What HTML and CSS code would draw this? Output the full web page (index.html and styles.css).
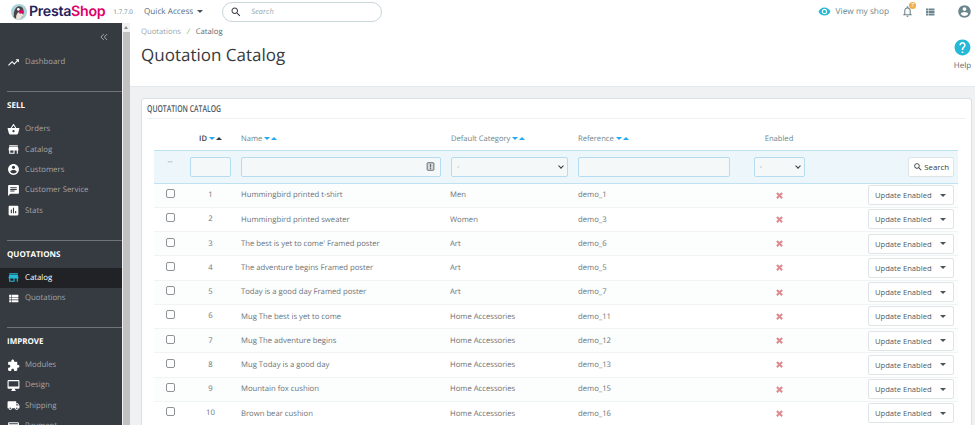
FILE: index.html
```html
<!DOCTYPE html>
<html lang="en">
<head>
  <meta charset="UTF-8" />
  <title>Quotation Catalog</title>
  <link rel="stylesheet" href="styles.css">
</head>
<body>
  <svg class="sprite" width="0" height="0">
    <symbol id="i-trend" viewBox="0 0 24 24"><path d="M16 6l2.29 2.29-4.88 4.88-4-4L2 16.59 3.41 18l6-6 4 4 6.3-6.29L22 12V6z"/></symbol>
    <symbol id="i-basket" viewBox="0 0 24 24"><path d="M17.21 9l-4.38-6.56c-.19-.28-.51-.42-.83-.42-.32 0-.64.14-.83.43L6.79 9H2c-.55 0-1 .45-1 1 0 .09.01.18.04.27l2.54 9.27c.23.84 1 1.46 1.92 1.46h13c.92 0 1.69-.62 1.93-1.46l2.54-9.27L23 10c0-.55-.45-1-1-1h-4.79zM9 9l3-4.4L15 9H9zm3 8c-1.1 0-2-.9-2-2s.9-2 2-2 2 .9 2 2-.9 2-2 2z"/></symbol>
    <symbol id="i-store" viewBox="0 0 24 24"><path d="M20 4H4v2h16V4zm1 10v-2l-1-5H4l-1 5v2h1v6h10v-6h4v6h2v-6h1zm-9 4H6v-4h6v4z"/></symbol>
    <symbol id="i-account" viewBox="0 0 24 24"><path d="M12 2C6.48 2 2 6.48 2 12s4.48 10 10 10 10-4.48 10-10S17.52 2 12 2zm0 3c1.66 0 3 1.34 3 3s-1.34 3-3 3-3-1.34-3-3 1.34-3 3-3zm0 14.2c-2.5 0-4.71-1.28-6-3.22.03-1.99 4-3.08 6-3.08 1.99 0 5.97 1.09 6 3.08-1.29 1.94-3.5 3.22-6 3.22z"/></symbol>
    <symbol id="i-chat" viewBox="0 0 24 24"><path d="M20 2H4c-1.1 0-1.99.9-1.99 2L2 22l4-4h14c1.1 0 2-.9 2-2V4c0-1.1-.9-2-2-2zM6 9h12v2H6V9zm8 5H6v-2h8v2zm4-6H6V6h12v2z"/></symbol>
    <symbol id="i-stats" viewBox="0 0 24 24"><path d="M19 3H5c-1.1 0-2 .9-2 2v14c0 1.1.9 2 2 2h14c1.1 0 2-.9 2-2V5c0-1.1-.9-2-2-2zM9 17H7v-7h2v7zm4 0h-2V7h2v10zm4 0h-2v-4h2v4z"/></symbol>
    <symbol id="i-list" viewBox="0 0 24 24"><path d="M4 14h4v-4H4v4zm0 5h4v-4H4v4zM4 9h4V5H4v4zm5 5h12v-4H9v4zm0 5h12v-4H9v4zM9 5v4h12V5H9z"/></symbol>
    <symbol id="i-puzzle" viewBox="0 0 24 24"><path d="M20.5 11H19V7c0-1.1-.9-2-2-2h-4V3.5C13 2.12 11.88 1 10.5 1S8 2.12 8 3.5V5H4c-1.1 0-1.99.9-1.99 2v3.8H3.5c1.49 0 2.7 1.21 2.7 2.7s-1.21 2.7-2.7 2.7H2V20c0 1.1.9 2 2 2h3.8v-1.5c0-1.49 1.21-2.7 2.7-2.7 1.49 0 2.7 1.21 2.7 2.7V22H17c1.1 0 2-.9 2-2v-4h1.5c1.38 0 2.5-1.12 2.5-2.5S21.88 11 20.5 11z"/></symbol>
    <symbol id="i-desktop" viewBox="0 0 24 24"><path d="M21 2H3c-1.1 0-2 .9-2 2v12c0 1.1.9 2 2 2h7l-2 3v1h8v-1l-2-3h7c1.1 0 2-.9 2-2V4c0-1.1-.9-2-2-2zm0 12H3V4h18v10z"/></symbol>
    <symbol id="i-truck" viewBox="0 0 24 24"><path d="M20 8h-3V4H3c-1.1 0-2 .9-2 2v11h2c0 1.66 1.34 3 3 3s3-1.34 3-3h6c0 1.66 1.34 3 3 3s3-1.34 3-3h2v-5l-3-4zM6 18.5c-.83 0-1.5-.67-1.5-1.5s.67-1.5 1.5-1.5 1.5.67 1.5 1.5-.67 1.5-1.5 1.5zm13.5-9l1.96 2.5H17V9.5h2.5zm-1.5 9c-.83 0-1.5-.67-1.5-1.5s.67-1.5 1.5-1.5 1.5.67 1.5 1.5-.67 1.5-1.5 1.5z"/></symbol>
    <symbol id="i-card" viewBox="0 0 24 24"><path d="M20 4H4c-1.11 0-1.99.89-1.99 2L2 18c0 1.11.89 2 2 2h16c1.11 0 2-.89 2-2V6c0-1.11-.89-2-2-2zm0 14H4v-6h16v6zm0-10H4V6h16v2z"/></symbol>
    <symbol id="i-eye" viewBox="0 0 24 24"><path d="M12 4.5C7 4.5 2.73 7.61 1 12c1.73 4.39 6 7.5 11 7.5s9.27-3.11 11-7.5c-1.73-4.39-6-7.5-11-7.5zM12 17c-2.76 0-5-2.24-5-5s2.24-5 5-5 5 2.24 5 5-2.24 5-5 5zm0-8c-1.66 0-3 1.34-3 3s1.34 3 3 3 3-1.34 3-3-1.34-3-3-3z"/></symbol>
    <symbol id="i-bell" viewBox="0 0 24 24"><path d="M12 22c1.1 0 2-.9 2-2h-4c0 1.1.9 2 2 2zm6-6v-5c0-3.07-1.63-5.64-4.5-6.32V4c0-.83-.67-1.5-1.5-1.5s-1.5.67-1.5 1.5v.68C7.64 5.36 6 7.92 6 11v5l-2 2v1h16v-1l-2-2zm-2 1H8v-6c0-2.48 1.51-4.5 4-4.5s4 2.02 4 4.5v6z"/></symbol>
    <symbol id="i-help" viewBox="0 0 24 24"><path d="M12 2C6.48 2 2 6.48 2 12s4.48 10 10 10 10-4.48 10-10S17.52 2 12 2zm1 17h-2v-2h2v2zm2.07-7.75l-.9.92C13.45 12.9 13 13.5 13 15h-2v-.5c0-1.1.45-2.1 1.17-2.83l1.24-1.26c.37-.36.59-.86.59-1.41 0-1.1-.9-2-2-2s-2 .9-2 2H8c0-2.21 1.79-4 4-4s4 1.79 4 4c0 .88-.36 1.68-.93 2.25z"/></symbol>
    <symbol id="i-search" viewBox="0 0 24 24"><path d="M15.5 14h-.79l-.28-.27C15.41 12.59 16 11.11 16 9.5 16 5.91 13.09 3 9.5 3S3 5.91 3 9.5 5.91 16 9.5 16c1.61 0 3.09-.59 4.23-1.57l.27.28v.79l5 4.99L20.49 19l-4.99-5zm-6 0C7.01 14 5 11.99 5 9.5S7.01 5 9.5 5 14 7.01 14 9.5 11.99 14 9.5 14z"/></symbol>
    <symbol id="i-close" viewBox="0 0 24 24"><path d="M21 7L17 3 12 8 7 3 3 7 8 12 3 17 7 21 12 16 17 21 21 17 16 12z"/></symbol>
    <symbol id="i-collapse" viewBox="0 0 24 24"><path d="M11.5 5L4.5 12l7 7M19.5 5l-7 7 7 7" fill="none" stroke="currentColor" stroke-width="2"/></symbol>
    <symbol id="i-exclaim" viewBox="0 0 24 24"><rect x="3" y="2" width="18" height="20" rx="2" fill="#d5dadc" stroke="currentColor" stroke-width="2.500"/><path d="M10.500 5.500h3v8.500h-3zM10.500 15.500h3v3h-3z"/></symbol>
  </svg>

  <header class="topbar">
    <div class="logo">
      <svg class="logo-bird" viewBox="0 0 24 24">
        <circle cx="12" cy="12" r="12" fill="#a9d3d8"/>
        <path d="M4 19C4 10 7 4 12 3.500c4.500-.300 7 3 7 8 0 5-2 9-6 10.500-3.500 1-7 0-9-3z" fill="#4a4448"/>
        <path d="M8 23c-1-4 0-8 3-10.500 3 .5 6 1.500 7.500 3.500-1.500 4.500-6 8-10.500 7z" fill="#efe4d8"/>
        <path d="M11 9l7 .500 1.500 3.500-6.500 1.500z" fill="#df0067"/>
        <circle cx="11" cy="8" r="2" fill="#fff"/>
      </svg>
      <span class="logo-text">Presta<b>Shop</b></span>
    </div>
    <span class="version">1.7.7.0</span>
    <span class="quick">Quick Access <i class="caret"></i></span>
    <div class="search-box">
      <svg class="icon"><use href="#i-search"/></svg>
      <span>Search</span>
    </div>
    <a class="shop-link"><svg class="icon"><use href="#i-eye"/></svg>View my shop</a>
    <div class="bell"><svg class="icon"><use href="#i-bell"/></svg><span class="badge">7</span></div>
    <svg class="icon top-list"><use href="#i-list"/></svg>
    <svg class="icon top-user"><use href="#i-account"/></svg>
  </header>

  <div class="layout">
    <nav class="sidebar">
      <div class="collapse"><svg class="icon"><use href="#i-collapse"/></svg></div>
      <a class="nav-item first"><svg class="icon"><use href="#i-trend"/></svg>Dashboard</a>

      <h4 class="nav-title">SELL</h4>
      <a class="nav-item"><svg class="icon"><use href="#i-basket"/></svg>Orders</a>
      <a class="nav-item"><svg class="icon"><use href="#i-store"/></svg>Catalog</a>
      <a class="nav-item"><svg class="icon"><use href="#i-account"/></svg>Customers</a>
      <a class="nav-item"><svg class="icon"><use href="#i-chat"/></svg>Customer Service</a>
      <a class="nav-item"><svg class="icon"><use href="#i-stats"/></svg>Stats</a>

      <h4 class="nav-title">QUOTATIONS</h4>
      <a class="nav-item active"><svg class="icon"><use href="#i-store"/></svg>Catalog</a>
      <a class="nav-item"><svg class="icon"><use href="#i-list"/></svg>Quotations</a>

      <h4 class="nav-title">IMPROVE</h4>
      <a class="nav-item"><svg class="icon"><use href="#i-puzzle"/></svg>Modules</a>
      <a class="nav-item"><svg class="icon"><use href="#i-desktop"/></svg>Design</a>
      <a class="nav-item"><svg class="icon"><use href="#i-truck"/></svg>Shipping</a>
      <a class="nav-item"><svg class="icon"><use href="#i-card"/></svg>Payment</a>
    </nav>
    <div class="scrollbar"><i class="scroll-up"></i><div class="scroll-thumb"></div></div>

    <main class="content">
      <section class="page-head">
        <div>
          <div class="crumbs"><span>Quotations</span><em>/</em><strong>Catalog</strong></div>
          <h1>Quotation Catalog</h1>
        </div>
        <div class="help"><svg class="icon"><use href="#i-help"/></svg><span>Help</span></div>
      </section>

      <section class="card">
        <h3 class="card-title"><span>QUOTATION CATALOG</span></h3>
        <table class="grid">
          <colgroup>
            <col class="c-check"><col class="c-id"><col class="c-name"><col class="c-cat"><col class="c-ref"><col class="c-en"><col class="c-act">
          </colgroup>
          <thead>
            <tr class="heads">
              <th></th>
              <th class="center strong">ID <i class="down"></i><i class="up dark"></i></th>
              <th>Name <i class="down"></i><i class="up"></i></th>
              <th class="cat-head">Default Category <i class="down"></i><i class="up"></i></th>
              <th>Reference <i class="down"></i><i class="up"></i></th>
              <th class="center">Enabled</th>
              <th></th>
            </tr>
            <tr class="filters">
              <td class="center dashes">--</td>
              <td class="center"><div class="field f-id"></div></td>
              <td><div class="field f-name"><svg class="icon"><use href="#i-exclaim"/></svg></div></td>
              <td><div class="field f-cat"><span>-</span><i class="chev"></i></div></td>
              <td><div class="field f-ref"></div></td>
              <td class="center"><div class="field f-en"><span>-</span><i class="chev"></i></div></td>
              <td class="right"><button class="btn-search"><svg class="icon"><use href="#i-search"/></svg>Search</button></td>
            </tr>
          </thead>
          <tbody id="rows">
            <tr><td class="center"><i class="check"></i></td><td class="center">1</td><td>Hummingbird printed t-shirt</td><td>Men</td><td>demo_1</td><td class="center"><svg class="icon no"><use href="#i-close"/></svg></td><td class="right"><button class="btn-update">Update Enabled<i class="caret"></i></button></td></tr>
            <tr><td class="center"><i class="check"></i></td><td class="center">2</td><td>Hummingbird printed sweater</td><td>Women</td><td>demo_3</td><td class="center"><svg class="icon no"><use href="#i-close"/></svg></td><td class="right"><button class="btn-update">Update Enabled<i class="caret"></i></button></td></tr>
            <tr><td class="center"><i class="check"></i></td><td class="center">3</td><td>The best is yet to come' Framed poster</td><td>Art</td><td>demo_6</td><td class="center"><svg class="icon no"><use href="#i-close"/></svg></td><td class="right"><button class="btn-update">Update Enabled<i class="caret"></i></button></td></tr>
            <tr><td class="center"><i class="check"></i></td><td class="center">4</td><td>The adventure begins Framed poster</td><td>Art</td><td>demo_5</td><td class="center"><svg class="icon no"><use href="#i-close"/></svg></td><td class="right"><button class="btn-update">Update Enabled<i class="caret"></i></button></td></tr>
            <tr><td class="center"><i class="check"></i></td><td class="center">5</td><td>Today is a good day Framed poster</td><td>Art</td><td>demo_7</td><td class="center"><svg class="icon no"><use href="#i-close"/></svg></td><td class="right"><button class="btn-update">Update Enabled<i class="caret"></i></button></td></tr>
            <tr><td class="center"><i class="check"></i></td><td class="center">6</td><td>Mug The best is yet to come</td><td>Home Accessories</td><td>demo_11</td><td class="center"><svg class="icon no"><use href="#i-close"/></svg></td><td class="right"><button class="btn-update">Update Enabled<i class="caret"></i></button></td></tr>
            <tr><td class="center"><i class="check"></i></td><td class="center">7</td><td>Mug The adventure begins</td><td>Home Accessories</td><td>demo_12</td><td class="center"><svg class="icon no"><use href="#i-close"/></svg></td><td class="right"><button class="btn-update">Update Enabled<i class="caret"></i></button></td></tr>
            <tr><td class="center"><i class="check"></i></td><td class="center">8</td><td>Mug Today is a good day</td><td>Home Accessories</td><td>demo_13</td><td class="center"><svg class="icon no"><use href="#i-close"/></svg></td><td class="right"><button class="btn-update">Update Enabled<i class="caret"></i></button></td></tr>
            <tr><td class="center"><i class="check"></i></td><td class="center">9</td><td>Mountain fox cushion</td><td>Home Accessories</td><td>demo_15</td><td class="center"><svg class="icon no"><use href="#i-close"/></svg></td><td class="right"><button class="btn-update">Update Enabled<i class="caret"></i></button></td></tr>
            <tr><td class="center"><i class="check"></i></td><td class="center">10</td><td>Brown bear cushion</td><td>Home Accessories</td><td>demo_16</td><td class="center"><svg class="icon no"><use href="#i-close"/></svg></td><td class="right"><button class="btn-update">Update Enabled<i class="caret"></i></button></td></tr>
          </tbody>
        </table>
      </section>
    </main>
  </div>
</body>
</html>
```

FILE: styles.css
```css
* {
  box-sizing: border-box;
  margin: 0;
  padding: 0;
}

html, body {
  height: 425px;
  overflow: hidden;
}

body {
  background: #fff;
  font-family: 'Open Sans', sans-serif;
  font-size: 7.8px;
  color: #6c868e;
  text-rendering: geometricPrecision;
}

.sprite { position: absolute; }
.icon { display: block; fill: currentColor; }
i { display: inline-block; }

/* top bar */
.topbar {
  display: flex;
  align-items: center;
  height: 23px;
  background: #fff;
  color: #6c868e;
}

.logo { display: flex; align-items: center; margin-left: 11px; }
.logo-bird { width: 16px; height: 16px; margin-right: 2px; }
.logo-text {
  font-family: 'Inter', sans-serif;
  font-weight: 600;
  font-size: 14.2px;
  letter-spacing: -0.3px;
  color: #25205c;
}
.logo-text b { font-weight: 600; color: #df0067; }

.version { margin-left: 8px; font-size: 6.4px; color: #6c868e; }
.quick { margin-left: 11px; font-size: 8.2px; color: #5d7079; }

.caret {
  width: 0;
  height: 0;
  margin-left: 2px;
  vertical-align: 1px;
  border-left: 3px solid transparent;
  border-right: 3px solid transparent;
  border-top: 3px solid #4a5257;
}

.search-box {
  display: flex;
  align-items: center;
  width: 160px;
  height: 20px;
  margin-left: 19px;
  padding-left: 7px;
  border: 1px solid #c9d6da;
  border-radius: 10px;
  font-size: 7.5px;
  font-style: italic;
  color: #9aaab0;
}
.search-box .icon { width: 12px; height: 12px; margin-right: 9px; color: #363a41; }

.shop-link { display: flex; align-items: center; margin-left: auto; font-size: 8.3px; color: #6c868e; }
.shop-link .icon { width: 13px; height: 13px; margin-right: 5px; color: #25b9d7; }
.bell { position: relative; margin-left: 12px; color: #6c868e; }
.bell .icon { width: 13px; height: 13px; }
.badge {
  position: absolute;
  top: -3px;
  right: -2px;
  width: 7px;
  height: 7px;
  border-radius: 50%;
  background: #f0ad4e;
  color: #fff;
  font-size: 5.5px;
  line-height: 7px;
  text-align: center;
}
.top-list { width: 12px; height: 12px; margin-left: 10px; color: #6c868e; }
.top-user { width: 15px; height: 15px; margin-left: 21px; margin-right: 3px; color: #6c868e; }

.layout { display: flex; height: 402px; }

/* sidebar */
.sidebar {
  flex: none;
  width: 122px;
  overflow: hidden;
  background: #363a41;
  color: #bebebe;
}

.collapse { display: flex; justify-content: flex-end; height: 29px; padding: 9px 13px 0 0; color: #bebebe; }
.collapse .icon { width: 10px; height: 10px; }

.nav-item {
  display: flex;
  align-items: center;
  height: 20.4px;
  padding-left: 7px;
  font-size: 7.8px;
  color: #a4a6a9;
}
.nav-item .icon { width: 13px; height: 13px; margin-right: 5px; color: #fff; }
.nav-item.first { margin-bottom: 19px; }
.nav-item.active { background: #202226; color: #fff; }
.nav-item.active .icon { color: #25b9d7; }

.nav-title {
  margin: 0 0 6.600px 7px;
  padding-top: 8px;
  border-top: 1px solid #70747a;
  font-size: 8px;
  font-weight: 700;
  line-height: 12px;
  color: #fff;
}
.nav-item + .nav-title { margin-top: 19px; }

.scrollbar {
  position: relative;
  flex: none;
  width: 8px;
  background: #f1f1f1;
}
.scroll-up {
  position: absolute;
  top: 3px;
  left: 1.500px;
  border-left: 2.500px solid transparent;
  border-right: 2.500px solid transparent;
  border-bottom: 3px solid #8c8c8c;
}
.scroll-thumb { height: 100%; margin: 9px 0 0 1px; background: #c1c1c1; }

/* page */
.content { flex: 1; background: #eff1f2; min-width: 0; }

.page-head {
  display: flex;
  justify-content: space-between;
  height: 64px;
  padding: 4px 3px 0 11px;
  background: #fff;
  border-bottom: 1px solid #e5e8ea;
}
.crumbs { display: flex; gap: 6px; font-size: 7.7px; line-height: 11px; color: #9aa5ab; }
.crumbs em { color: #8fbb4e; }
.crumbs strong { font-weight: 400; color: #5d6a70; }
h1 {
  margin-top: 3px;
  font-size: 17px;
  font-weight: 400;
  line-height: 27px;
  color: #363a41;
}

.help { display: flex; flex-direction: column; align-items: center; margin-top: 11px; color: #5d6a70; font-size: 8px; }
.help .icon { width: 19px; height: 19px; color: #25b9d7; margin-bottom: 3px; }

.card {
  height: 330px;
  margin: 11px 3px 0 11px;
  background: #fff;
  border: 1px solid #dbe0e3;
  border-radius: 3px;
}
.card-title {
  height: 20px;
  margin: 0 5px;
  font-size: 9.5px;
  font-weight: 600;
  line-height: 19px;
  color: #4e5a60;
  border-bottom: 1px solid #eef0f1;
}
.card-title span { display: inline-block; transform: scaleX(0.72); transform-origin: left; }

.grid {
  width: 804px;
  margin: 7px 0 0 12px;
  table-layout: fixed;
  border-collapse: collapse;
}
.c-check { width: 32px; }
.c-id { width: 49px; }
.c-name { width: 209px; }
.c-cat { width: 128px; }
.c-ref { width: 176.500px; }
.c-en { width: 61px; }
.c-act { width: 148.500px; }

th, td { padding: 0 0 0 6px; text-align: left; font-weight: 400; white-space: nowrap; }
.center { text-align: center; padding: 0; }
.right { text-align: right; padding: 0 4px 0 0; }

.heads th { height: 24px; padding-top: 2px; font-size: 7.6px; color: #6c868e; }
.heads .strong { font-weight: 600; color: #363a41; }
.heads .cat-head { padding-left: 7px; }
.down, .up { width: 0; height: 0; border-left: 3px solid transparent; border-right: 3px solid transparent; vertical-align: 1px; }
.down { border-top: 3px solid #1eaaf1; }
.up { margin-left: 1px; border-bottom: 3px solid #1eaaf1; }
.up.dark { border-bottom-color: #363a41; }

.filters td {
  height: 33px;
  background: #edf6fb;
  border-top: 1px solid #bfe2f2;
  border-bottom: 1px solid #bfe2f2;
}
.dashes { vertical-align: top; padding-top: 6px; color: #6c868e; }

.field {
  display: flex;
  align-items: center;
  height: 20px;
  background: #f5f8f9;
  border: 1px solid #b5dcef;
  border-radius: 2px;
  color: #8a979d;
  font-size: 7.5px;
}
.f-id { width: 41px; margin: 0 auto; }
.f-name { width: 200px; justify-content: flex-end; padding-right: 5px; }
.f-name .icon { width: 9px; height: 9px; color: #5f686d; }
.f-cat { width: 117px; margin-left: 1px; padding: 0 4px 0 5px; justify-content: space-between; }
.f-ref { width: 152px; }
.f-en { width: 51px; margin: 0 auto; padding: 0 4px 0 5px; justify-content: space-between; }

.chev {
  width: 4px;
  height: 4px;
  margin-top: -2px;
  border-right: 1.400px solid #363a41;
  border-bottom: 1.400px solid #363a41;
  transform: rotate(45deg);
}

.btn-search {
  display: inline-flex;
  align-items: center;
  height: 20px;
  padding: 0 4px;
  background: #fff;
  border: 1px solid #dfe4e6;
  border-radius: 2px;
  font: 400 7.8px 'Open Sans', sans-serif;
  color: #363a41;
}
.btn-search .icon { width: 10px; height: 10px; margin-right: 1px; }

tbody td { height: 24.25px; padding-top: 0.5px; border-bottom: 1px solid #f1f4f5; font-size: 7.7px; color: #6c7479; }
tbody td.right { padding-top: 0; }
tbody tr:nth-child(odd) td { background: #fcfdfd; }

.check {
  width: 9px;
  height: 9px;
  margin-bottom: 3px;
  vertical-align: middle;
  background: #fff;
  border: 1px solid #8f9396;
  border-radius: 2px;
}
.no { width: 9px; height: 9px; margin: 0 auto; color: #e08a92; }

.btn-update {
  display: inline-flex;
  align-items: center;
  justify-content: space-between;
  width: 86px;
  height: 20px;
  padding: 0 7px 0 6px;
  background: #fff;
  border: 1px solid #dfe4e6;
  border-radius: 2px;
  font: 400 7.6px 'Open Sans', sans-serif;
  color: #4e5a60;
}
```
